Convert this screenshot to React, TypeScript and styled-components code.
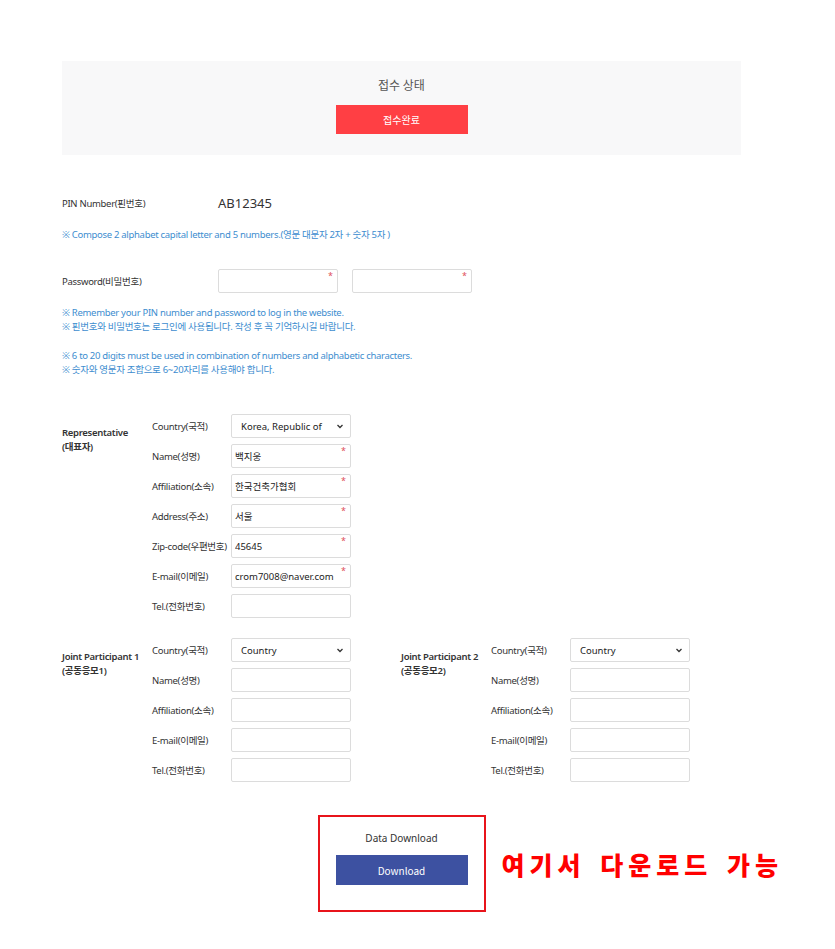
import React from "react";
import styled, { createGlobalStyle } from "styled-components";

const Global = createGlobalStyle`
  html, body { margin: 0; padding: 0; background: #fff; }
  body { font-family: "Noto Sans", "Noto Sans CJK KR", sans-serif; color: #333; }
  * { box-sizing: border-box; }
`;

const Page = styled.div`
  width: 835px;
  min-height: 949px;
  padding: 61px 0 0 62px;
`;

const Container = styled.div`
  width: 679px;
  display: flex;
  flex-direction: column;
`;

const StatusBox = styled.div`
  background: #f8f8f9;
  height: 94px;
  padding-top: 16px;
  display: flex;
  flex-direction: column;
  align-items: center;
  gap: 12px;
`;

const StatusTitle = styled.div`
  font-size: 12px;
  line-height: 16px;
  color: #555;
  font-family: "Noto Sans CJK KR", sans-serif;
`;

const ActionButton = styled.div<{ $bg: string; $h: number }>`
  width: 132px;
  height: ${(p) => p.$h}px;
  background: ${(p) => p.$bg};
  color: #fff;
  display: flex;
  align-items: center;
  justify-content: center;
  font-size: 10px;
  font-family: "Noto Sans CJK KR", sans-serif;
`;

const Row = styled.div<{ $mt: number; $h: number }>`
  margin-top: ${(p) => p.$mt}px;
  height: ${(p) => p.$h}px;
  display: flex;
  align-items: center;
`;

const RowLabel = styled.div`
  width: 156px;
  font-size: 9.5px;
  color: #333;
  letter-spacing: -0.3px;
`;

const PinValue = styled.div`
  font-size: 13px;
  color: #333;
`;

const Note = styled.div<{ $mt: number }>`
  margin-top: ${(p) => p.$mt}px;
  font-size: 9.5px;
  line-height: 14px;
  color: #3d8dcf;
  letter-spacing: -0.3px;
`;

const Field = styled.div`
  position: relative;
  width: 120px;
  height: 24px;
  border: 1px solid #dcdcdc;
  border-radius: 2px;
  background: #fff;
  display: flex;
  align-items: center;
`;

const FieldInput = styled.input`
  width: 100%;
  height: 100%;
  border: 0;
  outline: none;
  background: transparent;
  padding: 0 3px;
  font-size: 9.5px;
  color: #222;
  font-family: "Noto Sans", "Noto Sans CJK KR", sans-serif;
`;

const Required = styled.span`
  position: absolute;
  top: 1px;
  right: 4px;
  font-size: 9px;
  line-height: 9px;
  color: #e0505c;
`;

const SelectText = styled.span`
  flex: 1;
  padding-left: 9px;
  font-size: 9.5px;
  color: #222;
`;

const Chevron = styled.svg`
  width: 8px;
  height: 8px;
  margin-right: 6px;
`;

const PasswordFields = styled.div`
  display: flex;
  gap: 14px;
`;

const Sections = styled.div<{ $mt: number }>`
  margin-top: ${(p) => p.$mt}px;
  display: flex;
  gap: 50px;
`;

const Section = styled.div`
  display: flex;
`;

const SectionLabel = styled.div`
  width: 90px;
  padding-top: 12px;
  font-size: 9.5px;
  line-height: 14px;
  font-weight: 600;
  color: #333;
  letter-spacing: -0.3px;
`;

const FieldList = styled.div`
  display: flex;
  flex-direction: column;
  gap: 6px;
`;

const FieldRow = styled.div`
  display: flex;
  align-items: center;
`;

const FieldLabel = styled.div`
  width: 79px;
  font-size: 9.5px;
  color: #333;
  letter-spacing: -0.3px;
  white-space: nowrap;
`;

const DownloadArea = styled.div`
  margin-top: 33px;
  display: grid;
  grid-template-columns: minmax(0, 1fr) auto minmax(0, 1fr);
  align-items: center;
`;

const DownloadBox = styled.div`
  grid-column: 2;
  width: 168px;
  height: 97px;
  border: 2px solid #e8141b;
  display: flex;
  flex-direction: column;
  align-items: center;
  padding-top: 14px;
  gap: 10px;
`;

const BoxTitle = styled.div`
  font-size: 10px;
  line-height: 14px;
  color: #333;
`;

const Annotation = styled.div`
  padding-left: 16px;
  font-family: "Noto Sans CJK KR", sans-serif;
  font-size: 25px;
  font-weight: 900;
  letter-spacing: 5px;
  word-spacing: 4px;
  color: #f00;
  white-space: nowrap;
`;

type F = { label: string; value?: string; req?: boolean; select?: string };

const Input = ({ value, req }: { value?: string; req?: boolean }) => (
  <Field>
    <FieldInput defaultValue={value} readOnly />
    {req && <Required>*</Required>}
  </Field>
);

const Select = ({ text }: { text: string }) => (
  <Field>
    <SelectText>{text}</SelectText>
    <Chevron viewBox="0 0 8 8">
      <path d="M1.5 3 L4 5.5 L6.5 3" fill="none" stroke="#333" strokeWidth="1.3" />
    </Chevron>
  </Field>
);

const Group = ({ title, sub, fields }: { title: string; sub: string; fields: F[] }) => (
  <Section>
    <SectionLabel>
      {title}
      <br />
      {sub}
    </SectionLabel>
    <FieldList>
      {fields.map((f) => (
        <FieldRow key={f.label}>
          <FieldLabel>{f.label}</FieldLabel>
          {f.select ? <Select text={f.select} /> : <Input value={f.value} req={f.req} />}
        </FieldRow>
      ))}
    </FieldList>
  </Section>
);

const rep: F[] = [
  { label: "Country(국적)", select: "Korea, Republic of" },
  { label: "Name(성명)", value: "백지웅", req: true },
  { label: "Affiliation(소속)", value: "한국건축가협회", req: true },
  { label: "Address(주소)", value: "서울", req: true },
  { label: "Zip-code(우편번호)", value: "45645", req: true },
  { label: "E-mail(이메일)", value: "crom7008@naver.com", req: true },
  { label: "Tel.(전화번호)" },
];

const joint: F[] = [
  { label: "Country(국적)", select: "Country" },
  { label: "Name(성명)" },
  { label: "Affiliation(소속)" },
  { label: "E-mail(이메일)" },
  { label: "Tel.(전화번호)" },
];

export default function App() {
  return (
    <Page>
      <Global />
      <Container>
        <StatusBox>
          <StatusTitle>접수 상태</StatusTitle>
          <ActionButton $bg="#ff3f44" $h={29}>접수완료</ActionButton>
        </StatusBox>

        <Row $mt={38} $h={20}>
          <RowLabel>PIN Number(핀번호)</RowLabel>
          <PinValue>AB12345</PinValue>
        </Row>
        <Note $mt={15}>※ Compose 2 alphabet capital letter and 5 numbers.(영문 대문자 2자 + 숫자 5자 )</Note>

        <Row $mt={27} $h={24}>
          <RowLabel>Password(비밀번호)</RowLabel>
          <PasswordFields>
            <Input req />
            <Input req />
          </PasswordFields>
        </Row>

        <Note $mt={13}>
          ※ Remember your PIN number and password to log in the website.
          <br />※ 핀번호와 비밀번호는 로그인에 사용됩니다. 작성 후 꼭 기억하시길 바랍니다.
        </Note>
        <Note $mt={15}>
          ※ 6 to 20 digits must be used in combination of numbers and alphabetic characters.
          <br />※ 숫자와 영문자 조합으로 6~20자리를 사용해야 합니다.
        </Note>

        <Sections $mt={37}>
          <Group title="Representative" sub="(대표자)" fields={rep} />
        </Sections>

        <Sections $mt={20}>
          <Group title="Joint Participant 1" sub="(공동응모1)" fields={joint} />
          <Group title="Joint Participant 2" sub="(공동응모2)" fields={joint} />
        </Sections>

        <DownloadArea>
          <DownloadBox>
            <BoxTitle>Data Download</BoxTitle>
            <ActionButton $bg="#3d51a1" $h={30}>Download</ActionButton>
          </DownloadBox>
          <Annotation>여기서 다운로드 가능</Annotation>
        </DownloadArea>
      </Container>
    </Page>
  );
}
